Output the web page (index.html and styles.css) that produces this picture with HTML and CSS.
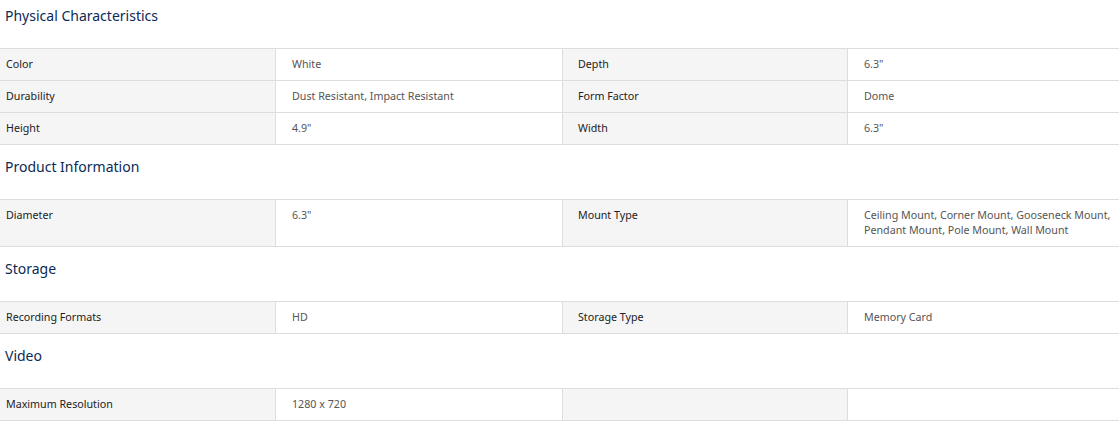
FILE: index.html
```html
<!DOCTYPE html>
<html lang="en">
<head>
<meta charset="utf-8">
<title>Specifications</title>
<link rel="stylesheet" href="styles.css">
</head>
<body>
<div class="specs">
  <section class="group first">
    <h2 class="group-title">Physical Characteristics</h2>
    <div class="table">
      <div class="row">
        <div class="cell label lead">Color</div><div class="cell value">White</div>
        <div class="cell label">Depth</div><div class="cell value">6.3"</div>
      </div>
      <div class="row">
        <div class="cell label lead">Durability</div><div class="cell value">Dust Resistant, Impact Resistant</div>
        <div class="cell label">Form Factor</div><div class="cell value">Dome</div>
      </div>
      <div class="row">
        <div class="cell label lead">Height</div><div class="cell value">4.9"</div>
        <div class="cell label">Width</div><div class="cell value">6.3"</div>
      </div>
    </div>
  </section>
  <section class="group">
    <h2 class="group-title">Product Information</h2>
    <div class="table">
      <div class="row">
        <div class="cell label lead">Diameter</div><div class="cell value">6.3"</div>
        <div class="cell label">Mount Type</div><div class="cell value">Ceiling Mount, Corner Mount, Gooseneck Mount, Pendant Mount, Pole Mount, Wall Mount</div>
      </div>
    </div>
  </section>
  <section class="group">
    <h2 class="group-title">Storage</h2>
    <div class="table">
      <div class="row">
        <div class="cell label lead">Recording Formats</div><div class="cell value">HD</div>
        <div class="cell label">Storage Type</div><div class="cell value">Memory Card</div>
      </div>
    </div>
  </section>
  <section class="group">
    <h2 class="group-title">Video</h2>
    <div class="table">
      <div class="row">
        <div class="cell label lead">Maximum Resolution</div><div class="cell value">1280 x 720</div>
        <div class="cell label"></div><div class="cell value"></div>
      </div>
    </div>
  </section>
</div>
</body>
</html>
```
FILE: styles.css
```css
html, body {
  margin: 0;
  padding: 0;
  background: #ffffff;
}
body {
  font-family: "Noto Sans", "Open Sans", sans-serif;
  color: #333333;
}
.specs {
  width: 1119px;
}
.group-title {
  margin: 0;
  padding: 12px 0 22px 5px;
  font-size: 14px;
  line-height: 20px;
  font-weight: 400;
  color: #0b2a55;
}
.group.first .group-title {
  padding-top: 6px;
}
.table {
  border-top: 1px solid #dddddd;
}
.row {
  display: grid;
  grid-template-columns: 275px 287px 285px 1fr;
  border-bottom: 1px solid #dddddd;
}
.cell {
  padding: 8px 8px 8px 16px;
  font-size: 10.7px;
  line-height: 15px;
  border-left: 1px solid #dddddd;
}
.cell.label {
  background: #f5f5f5;
  color: #222222;
  font-weight: 400;
  padding-left: 15px;
}
.cell.label.lead {
  border-left: none;
  padding-left: 6px;
}
.cell.value {
  background: #ffffff;
  color: #555555;
  padding-left: 16px;
}
```
